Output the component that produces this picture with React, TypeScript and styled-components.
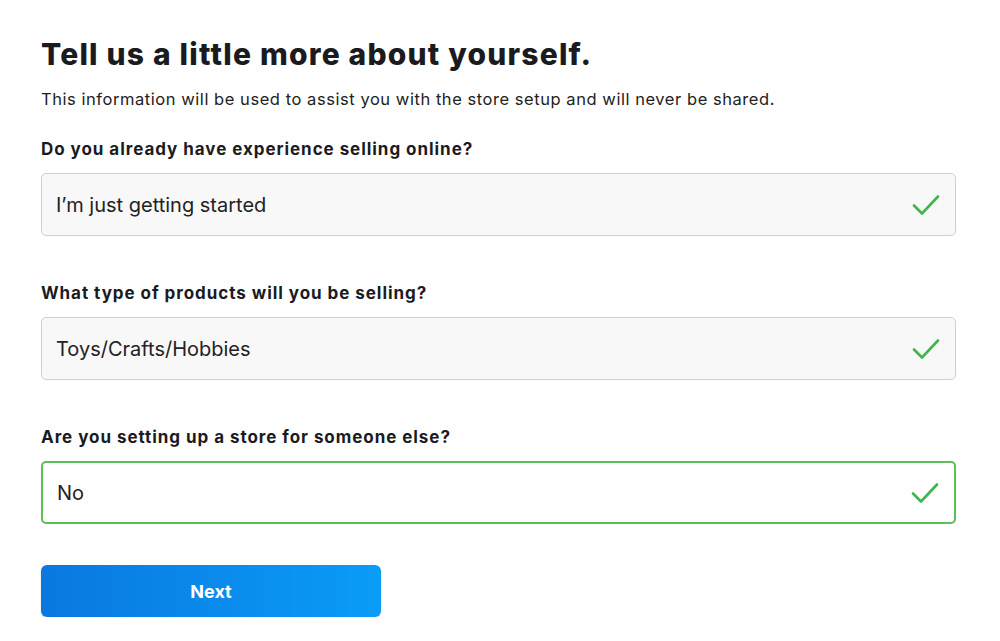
import styled, { createGlobalStyle } from "styled-components";

const Global = createGlobalStyle`
  body { margin: 0; background: #fff; font-family: Inter, "Noto Sans", sans-serif; color: #1d1d1f; }
`;

const questions = [
  { label: "Do you already have experience selling online?", value: "I’m just getting started", active: false },
  { label: "What type of products will you be selling?", value: "Toys/Crafts/Hobbies", active: false },
  { label: "Are you setting up a store for someone else?", value: "No", active: true },
];

function Check() {
  return (
    <svg width="28" height="22" viewBox="0 0 28 22" fill="none">
      <path d="M2 11.5l8 8L26 2.5" stroke="#3fb54c" strokeWidth="2.6" strokeLinecap="round" strokeLinejoin="round" />
    </svg>
  );
}

export default function App() {
  return (
    <>
      <Global />
      <Page>
        <Title>Tell us a little more about yourself.</Title>
        <Intro>This information will be used to assist you with the store setup and will never be shared.</Intro>
        {questions.map((q) => (
          <Field key={q.label}>
            <Label>{q.label}</Label>
            <Select $active={q.active}>
              <span>{q.value}</span>
              <Check />
            </Select>
          </Field>
        ))}
        <NextButton>Next</NextButton>
      </Page>
    </>
  );
}

const Page = styled.div`
  padding: 36px 0 0 41px;
  width: 915px;
`;

const Title = styled.h1`
  margin: 0;
  font-size: 30px;
  font-weight: 800;
  line-height: 36px;
  letter-spacing: 1.2px;
  color: #1b1b1f;
`;

const Intro = styled.p`
  margin: 16px 0 0;
  font-size: 16.5px;
  line-height: 22px;
  letter-spacing: 0.55px;
  color: #222;
`;

const Field = styled.div`
  margin-top: 28px;
  & + & { margin-top: 46px; }
`;

const Label = styled.div`
  font-size: 17px;
  font-weight: 700;
  line-height: 22px;
  letter-spacing: 0.95px;
  color: #1b1b1f;
  margin-bottom: 13px;
`;

const Select = styled.div<{ $active: boolean }>`
  box-sizing: border-box;
  height: 63px;
  display: flex;
  align-items: center;
  justify-content: space-between;
  padding: 0 15px 0 14px;
  border-radius: 5px;
  font-size: 20px;
  color: #222;
  background: ${({ $active }) => ($active ? "#fff" : "#f8f8f8")};
  border: ${({ $active }) => ($active ? "2px solid #5cbf55" : "1px solid #cfcfcf")};
`;

const NextButton = styled.button`
  margin-top: 41px;
  width: 340px;
  height: 52px;
  border: none;
  border-radius: 6px;
  background: linear-gradient(90deg, #0a78df, #0a9cf6);
  color: #fff;
  font-family: Inter, sans-serif;
  font-size: 18px;
  font-weight: 700;
  box-shadow: 0 1px 2px rgba(0, 0, 0, 0.15);
`;
